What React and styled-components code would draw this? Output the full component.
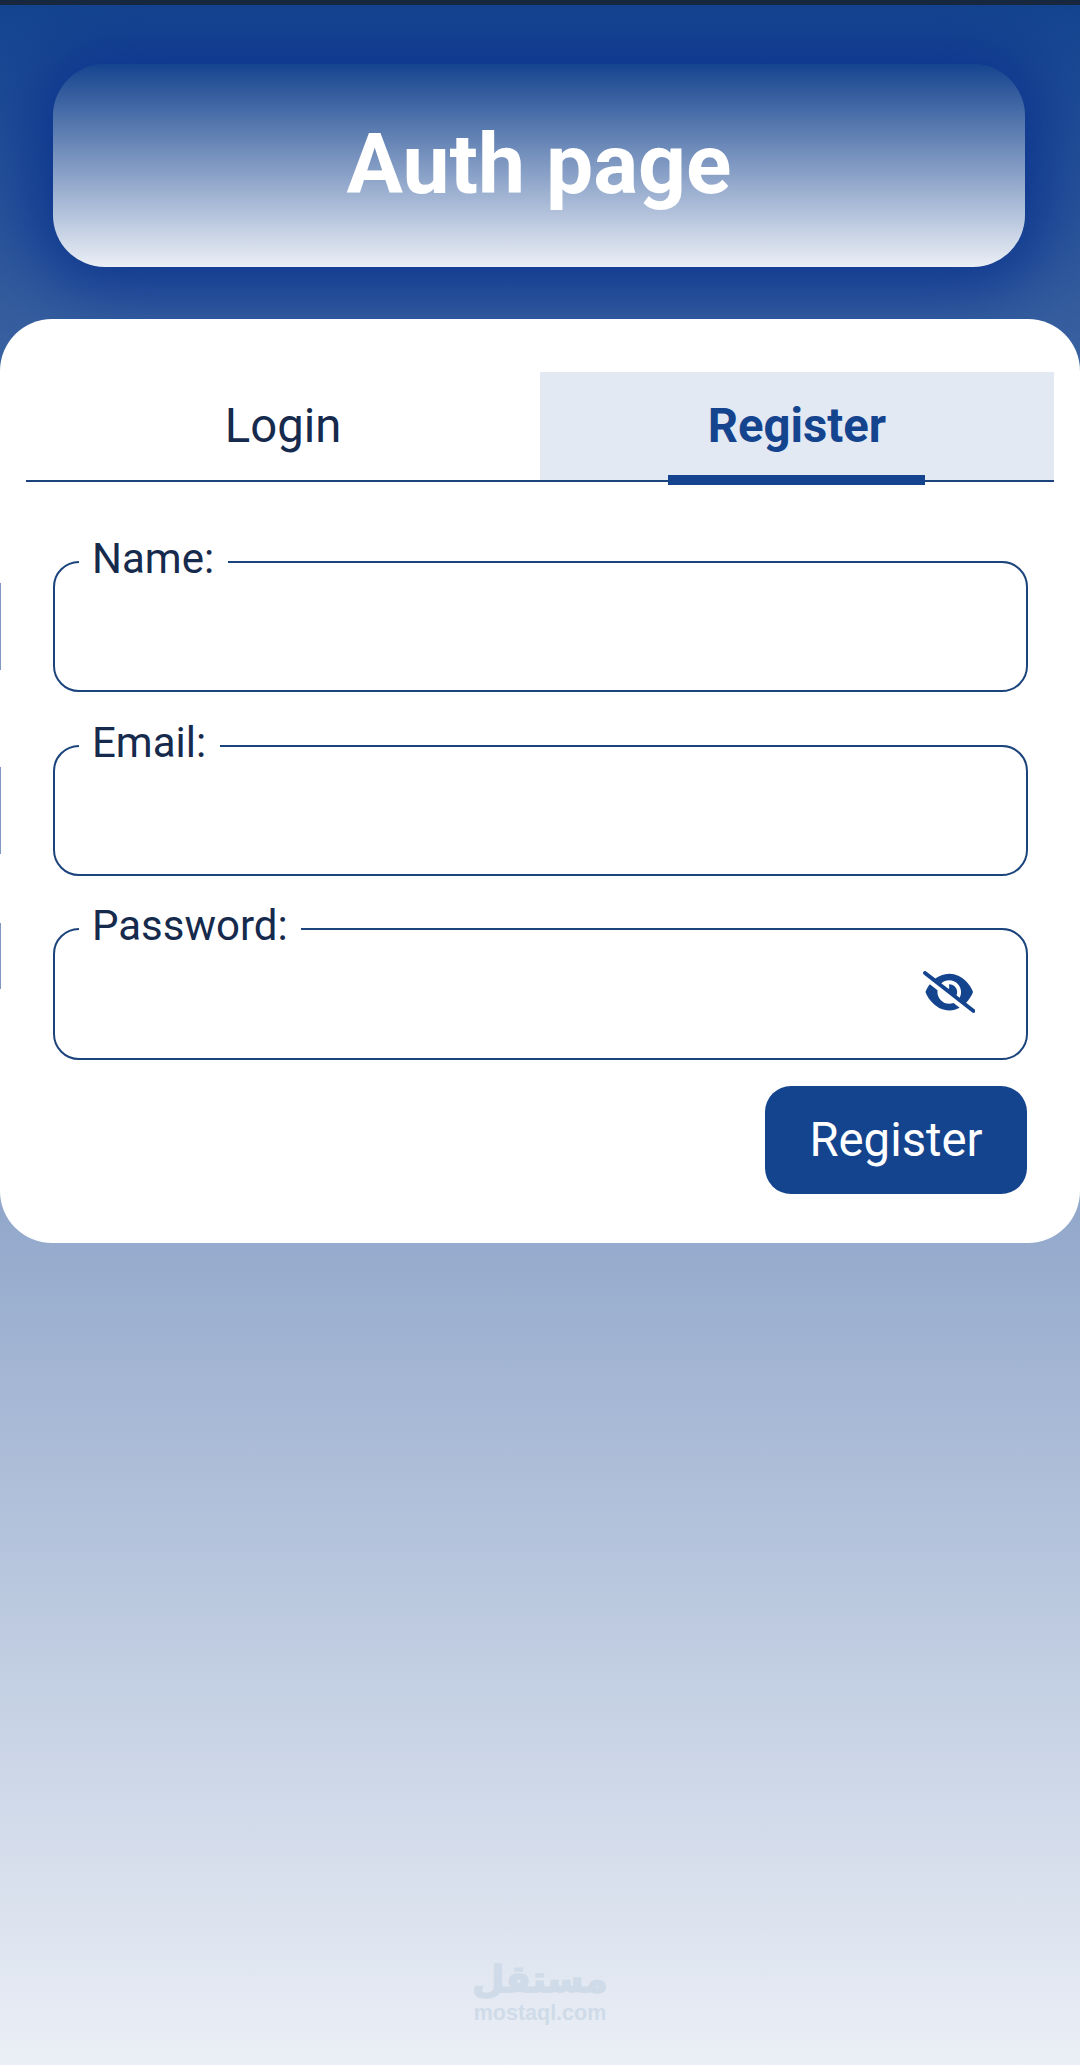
import { useState } from 'react';
import styled, { createGlobalStyle, ThemeProvider } from 'styled-components';
import { FaEyeSlash } from 'react-icons/fa6';

const theme = {
  primary: '#15448f',
  line: '#1c447c',
  text: '#152a4c',
  tint: '#e2e9f3',
  pale: '#ebeff6',
  glow: '#0d358f',
};

const GlobalStyle = createGlobalStyle`
  * {
    box-sizing: border-box;
  }
  body {
    margin: 0;
    font-family: Roboto, sans-serif;
    color: ${theme.text};
  }
`;

const Page = styled.div`
  display: flex;
  flex-direction: column;
  height: 2065px;
  overflow: hidden;
  border-top: 5px solid #17273e;
  background: linear-gradient(${(p) => p.theme.primary}, ${(p) => p.theme.pale});
`;

const Header = styled.header`
  display: flex;
  justify-content: center;
  width: 972px;
  height: 203px;
  margin: 59px 0 52px 53px;
  padding-top: 52px;
  border-radius: 52px;
  background: linear-gradient(${(p) => p.theme.primary}, ${(p) => p.theme.pale});
  box-shadow: 0 0 66px 20px ${(p) => p.theme.glow};
`;

const Title = styled.h1`
  margin: 0;
  font-size: 84px;
  line-height: 98px;
  font-weight: 700;
  color: #fff;
`;

const Card = styled.main`
  position: relative;
  height: 924px;
  padding-top: 53px;
  border-radius: 52px;
  background: #fff;
`;

const Tabs = styled.nav`
  display: flex;
  height: 110px;
  margin: 0 26px;
  border-bottom: 2px solid ${(p) => p.theme.line};
`;

const Tab = styled.button`
  position: relative;
  flex: 1;
  padding: 0;
  border: 0;
  font: ${(p) => (p.$active ? 700 : 400)} 47.25px/108px Roboto, sans-serif;
  color: ${(p) => (p.$active ? p.theme.primary : p.theme.text)};
  background: ${(p) => (p.$active ? p.theme.tint : 'transparent')};

  &::after {
    content: '';
    display: ${(p) => (p.$active ? 'block' : 'none')};
    position: absolute;
    left: calc(25% - 0.5px);
    bottom: -5px;
    width: 50%;
    height: 10px;
    background: ${(p) => p.theme.primary};
  }
`;

const Form = styled.form`
  display: flex;
  flex-direction: column;
  gap: 25.5px;
  padding: 51.75px 52.5px 0;
`;

const Field = styled.fieldset`
  display: flex;
  align-items: center;
  height: 158.25px;
  min-width: 0;
  margin: 0;
  padding: 0 50.5px 0 24px;
  border: 2px solid ${(p) => p.theme.line};
  border-radius: 26px;
`;

const Label = styled.legend`
  padding: 0 13.5px 7px;
  font-size: 42px;
  line-height: 49px;
`;

const Input = styled.input`
  flex: 1;
  min-width: 0;
  height: 69px;
  border: 0;
  outline: 0;
  background: transparent;
  font: 42px Roboto, sans-serif;
`;

const ToggleIcon = styled(FaEyeSlash)`
  width: 52.5px;
  height: 42px;
  color: ${(p) => p.theme.primary};
`;

const Submit = styled.button`
  align-self: flex-end;
  width: 262px;
  height: 108px;
  margin: 1px 0.5px 0 0;
  padding: 0;
  border: 0;
  border-radius: 26px;
  font: 47.25px/108px Roboto, sans-serif;
  color: #fff;
  background: ${(p) => p.theme.primary};
`;

// Edge of the login slide, still visible beside the register one
const SlideEdge = styled.span`
  position: absolute;
  left: 0;
  top: ${(p) => p.$top}px;
  width: 1px;
  height: ${(p) => p.$height}px;
  background: #8099c4;
`;

const Watermark = styled.footer`
  display: flex;
  flex-direction: column;
  align-items: center;
  width: 130px;
  margin: auto auto 40px;
  color: #cfdbe8;
`;

const Brand = styled.span`
  font: 700 37px/43px 'DejaVu Sans', sans-serif;
  -webkit-text-stroke: 1.5px currentColor;
`;

const Domain = styled.span`
  font: 700 21.5px/24px 'Liberation Sans', sans-serif;
`;

const fields = [
  { name: 'name', label: 'Name:', type: 'text' },
  { name: 'email', label: 'Email:', type: 'email' },
  { name: 'password', label: 'Password:', type: 'password' },
];

const App = () => {
  const [active, setActive] = useState('Register');

  return (
    <ThemeProvider theme={theme}>
      <GlobalStyle />
      <Page>
        <Header>
          <Title>Auth page</Title>
        </Header>
        <Card>
          <Tabs>
            {['Login', 'Register'].map((tab) => (
              <Tab key={tab} $active={tab === active} onClick={() => setActive(tab)}>
                {tab}
              </Tab>
            ))}
          </Tabs>
          <SlideEdge $top={264} $height={87} />
          <SlideEdge $top={448} $height={87} />
          <SlideEdge $top={604} $height={66} />
          <Form onSubmit={(e) => e.preventDefault()}>
            {fields.map(({ name, label, type }) => (
              <Field key={name}>
                <Label>{label}</Label>
                <Input name={name} type={type} aria-label={label} />
                {type === 'password' && <ToggleIcon />}
              </Field>
            ))}
            <Submit>Register</Submit>
          </Form>
        </Card>
        <Watermark>
          <Brand lang="ar">مستقل</Brand>
          <Domain>mostaql.com</Domain>
        </Watermark>
      </Page>
    </ThemeProvider>
  );
};

export default App;
